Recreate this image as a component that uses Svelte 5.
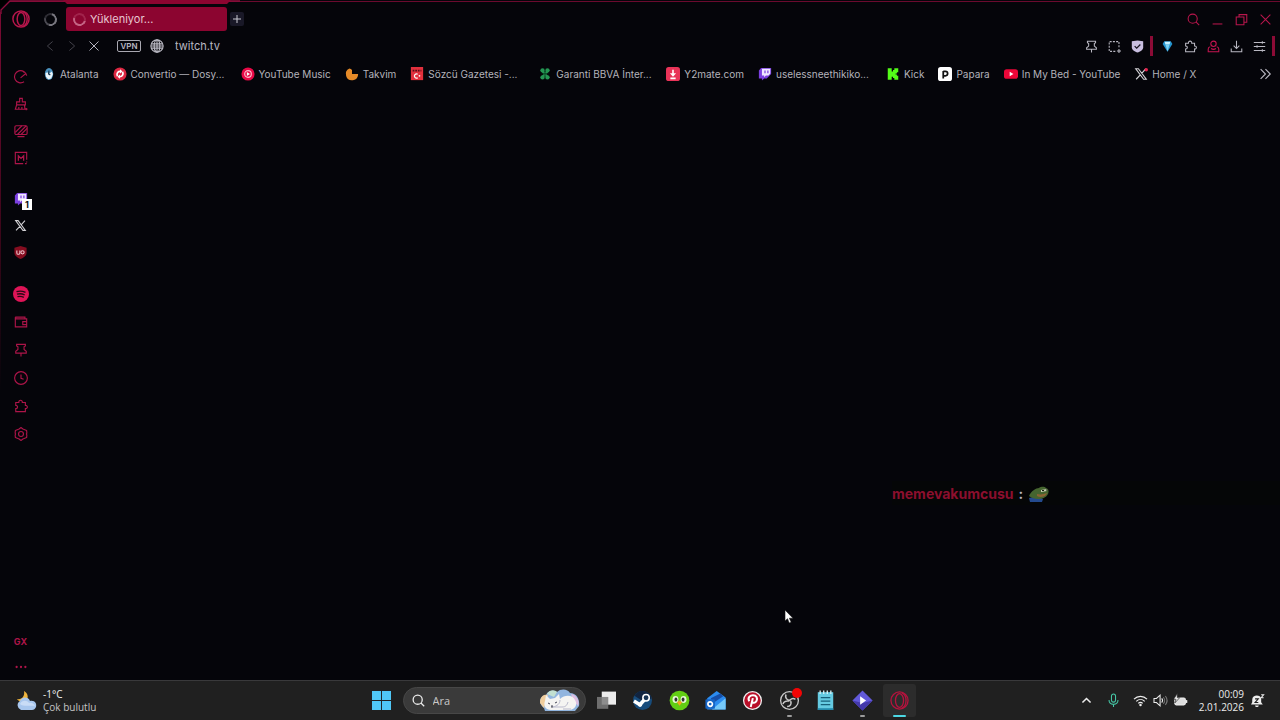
<script lang="ts">
    interface Bookmark {
        icon: string;
        label: string;
        long?: boolean;
    }

    let address = $state("twitch.tv");
    let search = $state("");

    const bookmarks: Bookmark[] = [
        { icon: "atalanta", label: "Atalanta" },
        { icon: "convertio", label: "Convertio — Dosy...", long: true },
        { icon: "ytmusic", label: "YouTube Music" },
        { icon: "takvim", label: "Takvim" },
        { icon: "sozcu", label: "Sözcü Gazetesi -...", long: true },
        { icon: "clover", label: "Garanti BBVA İnter...", long: true },
        { icon: "y2mate", label: "Y2mate.com" },
        { icon: "twitch", label: "uselessneethikiko...", long: true },
        { icon: "kick", label: "Kick" },
        { icon: "papara", label: "Papara" },
        { icon: "youtube", label: "In My Bed - YouTube" },
        { icon: "xdot", label: "Home / X" },
    ];

    const sideGroups = [
        ["gauge", "cleaner", "wallpaper", "mods"],
        ["twitch", "x", "shield"],
        ["spotify", "wallet", "pin", "clock", "puzzle", "settings"],
    ];

    const toolIcons = ["pin", "snapshot", "check"];
    const extIcons = ["gem", "puzzle", "person", "download", "sliders"];
    const windowIcons = ["search", "minimize", "restore", "close"];

    const apps = [
        { icon: "taskview" },
        { icon: "steam" },
        { icon: "duolingo" },
        { icon: "mail" },
        { icon: "pinterest" },
        { icon: "obs", running: true },
        { icon: "notepad" },
        { icon: "clip", running: true },
        { icon: "opera", running: true, active: true },
    ];
</script>

{#snippet icon(name: string)}
    <svg class="icon" viewBox="0 0 16 16" aria-hidden="true">
        {#if name === "opera"}
            <circle cx="8" cy="8" r="7.2" />
            <ellipse cx="8" cy="8" rx="3.4" ry="5.8" />
            <path d="M10 1.6c2.6 1.2 3.5 3.6 3.5 6.4s-.9 5.200-3.500 6.400" />
        {:else if name === "gauge"}
            <path d="M14.500 6.500a7 7 0 1 0-3 7M11.500 2.500l-1.500-1M7.500 9l6-5" />
        {:else if name === "cleaner"}
            <path d="M6.500 1.500h3v4h3.500v3.500H3V5.500h3.500zM3 9l-1.500 5h11L12 9M5.500 14v-2.500M9 14v-2.500M14 12.500v2.500M12.800 13.800h2.600" />
        {:else if name === "wallpaper"}
            <rect x="1" y="2" width="14" height="10" rx="1.500" />
            <path d="M1.500 9.500L9 2M4 12L14 2M8 12l7-7M4 14.500h8" />
        {:else if name === "mods"}
            <path d="M14.500 10V1.500h-13v13h9M14.500 12v1M12.500 14.500h2" />
            <path stroke-width="1.500" d="M5 11V5.500l3 3 3-3V11" />
        {:else if name === "twitch"}
            <path fill="#7b3fe0" stroke="none" d="M3.500 1L1 4v9h3.500v2.500L7 13h3l5-5V1z" />
            <path fill="#efe6ff" stroke="none" d="M4.500 2H14v5.500l-2 2.200H9l-2 2v-2H4.500z" />
            <path stroke="#7b3fe0" stroke-width="1.400" d="M8 4v3.200M11.300 4v3.200" />
        {:else if name === "x" || name === "xdot"}
            <path stroke="#d3d2d6" stroke-width="1.300" d="M2 2h3l9 12h-3zM13.500 2L8.800 7.200M7.200 9L2.500 14" />
            {#if name === "xdot"}<circle cx="14" cy="3" r="2" fill="#e5224d" stroke="none" />{/if}
        {:else if name === "shield"}
            <path fill="#850d20" stroke="none" d="M8 0l7.500 2v6c0 4.500-4 6.500-7.500 8C4.500 14.500.5 12.500.5 8V2z" />
            <path stroke="#f1c5cc" stroke-width="1.300" d="M3.500 5.500v3c0 1 .6 1.700 1.800 1.700S7.200 9.500 7.200 8.500v-3" />
            <circle cx="10.500" cy="7.800" r="2" stroke="#f1c5cc" stroke-width="1.300" />
        {:else if name === "spotify"}
            <circle cx="8" cy="8" r="8" fill="#df1457" stroke="none" />
            <path stroke="#2a0714" stroke-width="1.300" d="M3.500 5.600c3-.9 6.300-.6 9 .8M4 8.200c2.700-.8 5.400-.5 7.700.8M4.500 10.700c2.200-.6 4.400-.4 6.300.7" />
        {:else if name === "wallet"}
            <path d="M12.500 4.500V2.500H2v2M1.500 2.500v11h13v-9h-13M14.500 7.500H10v3.500h4.500" />
        {:else if name === "pin"}
            <path d="M3 1.500h10v1.800l-1.500 1v3.200L14 9.500v2H2v-2l2.500-2V4.300L3 3.300zM8 11.500V15.500" />
        {:else if name === "clock"}
            <circle cx="8" cy="8" r="7.300" />
            <path d="M8 4v4.300l3 1.200" />
        {:else if name === "puzzle"}
            <path d="M2 4h3.500c-.5-3.500 4.500-3.500 4 0H13v3.300c3-.3 3 4 0 3.700V14.500H2V11c2.800 0 2.800-3.700 0-3.700z" />
        {:else if name === "settings"}
            <path stroke-linejoin="round" d="M8 .6l2.200 1.600 4.200 1.700.3 3L14.200 8l.5 1.100-.3 3-4.200 1.700L8 15.400l-2.200-1.600-4.200-1.700-.3-3L1.800 8l-.5-1.100.3-3 4.200-1.700z" />
            <circle cx="8" cy="8" r="2.800" />
        {:else if name === "search"}
            <circle cx="7" cy="7" r="5.600" />
            <path d="M11 11l4 4" />
        {:else if name === "minimize"}
            <path d="M2 13.500h12" />
        {:else if name === "restore"}
            <path d="M5 5V2h9.500v9.500H11M1.500 5H11v9.500H1.500z" />
        {:else if name === "close"}
            <path d="M2 2l12 12M14 2L2 14" />
        {:else if name === "back"}
            <path d="M11.500 2l-7 6 7 6" />
        {:else if name === "forward"}
            <path d="M4.500 2l7 6-7 6" />
        {:else if name === "globe"}
            <circle cx="8" cy="8" r="7" />
            <ellipse cx="8" cy="8" rx="3.200" ry="7" />
            <path d="M1.500 5.500h13M1.500 10.500h13M8 1v14M1 8h14" />
        {:else if name === "snapshot"}
            <path stroke-dasharray="2.500 1.500" d="M13.500 9V2h-12v12H10" />
            <path d="M13.500 11v5M11 13.500h5" />
        {:else if name === "check"}
            <path fill="#c9bfe0" stroke="none" d="M1 1.500l7-1 7 1V9c0 3.500-4 5.500-7 6.500C5 14.500 1 12.500 1 9z" />
            <path stroke="#17131f" stroke-width="1.500" d="M4.500 7.500L7 10l4.500-4.500" />
        {:else if name === "gem"}
            <path fill="#2494cf" stroke="none" d="M4 1.500h8L14 5 8 14.500 2 5z" />
            <path fill="#c8f1ff" stroke="none" d="M4.500 2h7l-1 3.500h-5z" />
            <path fill="#7bd0f2" stroke="none" d="M5.500 5.500h5L8 14z" />
        {:else if name === "person"}
            <circle cx="8" cy="4.700" r="3.300" />
            <path d="M4 8.200C2 8.500 1.500 10 1.500 11v3.500h13V11c0-1-.5-2.500-2.500-2.800M5 10.500c1.800 1.200 4.200 1.200 6 0" />
        {:else if name === "download"}
            <path d="M8 1v9.500M4.500 7L8 10.500 11.500 7M1.500 10.500v4h13v-4" />
        {:else if name === "sliders"}
            <path d="M1 3h14M1 8h14M1 13h14M11.500 1.500v3M5 6.500v3M11.500 11.500v3" />
        {:else if name === "more"}
            <path d="M3 2.500L8.500 8 3 13.500M8.500 2.500L14 8l-5.500 5.500" />
        {:else if name === "atalanta"}
            <ellipse cx="8" cy="8" rx="4.800" ry="6.800" fill="#4b91bd" stroke="none" />
            <path fill="#eaf4fa" stroke="none" d="M4 7l2-1 2 2 3-3 1.500 3-2 5-3.500 1-2.500-3z" />
            <path stroke="#153047" d="M8 4l-.5 4 2 1" />
        {:else if name === "convertio"}
            <circle cx="8" cy="8" r="7.500" fill="#dc2742" stroke="none" />
            <path stroke="#fff" stroke-width="2" d="M5 10.500C3.500 7 6 4.500 9 5M11 5.500c1.500 3.500-1 6-4 5.500" />
            <path fill="#fff" stroke="none" d="M8 2.500L11 5 8 7.500zM8 8.500v5L5 11z" />
        {:else if name === "ytmusic"}
            <circle cx="8" cy="8" r="7.500" fill="#e80846" stroke="none" />
            <circle cx="8" cy="8" r="3.800" stroke="#ffb7ca" />
            <path fill="#fff" stroke="none" d="M6.700 5.800L10.300 8l-3.600 2.200z" />
        {:else if name === "takvim"}
            <path fill="#e58a28" stroke="none" d="M8 8V3.500A4 4 0 0 0 5 1.800 7 7 0 1 0 15 8z" />
        {:else if name === "sozcu"}
            <path fill="#e2303d" stroke="none" d="M1 0h14v15H1z" />
            <path stroke="#571019" stroke-width="2" stroke-dasharray="2 1" d="M3 4h10" />
            <path stroke="#fff" stroke-width="1.400" d="M8.800 8.300a2.400 2.400 0 1 0 0 4" />
            <circle cx="10.800" cy="10" r="1" fill="#fff" stroke="none" />
        {:else if name === "clover"}
            <g fill="#249653" stroke="none">
                <circle cx="5.200" cy="3.800" r="2.500" /><circle cx="10.800" cy="3.800" r="2.500" />
                <circle cx="5.200" cy="11.800" r="2.500" /><circle cx="10.800" cy="11.800" r="2.500" />
                <path d="M3.500 5h9L9.500 8l3 3h-9l3-3z" />
            </g>
            <path stroke="#063a1c" stroke-width=".9" d="M8 2v12M4 7.800h8" />
        {:else if name === "y2mate"}
            <rect x="0" y="0" width="16" height="16" rx="3" fill="#e93358" stroke="none" />
            <path stroke="#fff" stroke-width="1.800" d="M8 3v6M5 13h6" />
            <path fill="#fff" stroke="none" d="M4.500 7h7L8 11z" />
        {:else if name === "kick"}
            <path fill="#53fc18" stroke="none" d="M2 1.500h4.500V5H8V3.500h1.500v-2H14V6h-1.500v1.500H11v1h1.500V10H14v4.500H9.500v-2H8V11H6.500v3.500H2z" />
        {:else if name === "papara"}
            <rect x="0" y="0" width="16" height="16" rx="3" fill="#fff" stroke="none" />
            <path stroke="#111" stroke-width="2" d="M6 4.500v8.500M6 5h2.500a2.300 2.300 0 1 1 0 5H6" />
        {:else if name === "youtube"}
            <rect x="0" y="2.500" width="16" height="11" rx="3" fill="#ec0638" stroke="none" />
            <path fill="#fff" stroke="none" d="M6.500 5.500L10.800 8l-4.300 2.500z" />
        {:else if name === "start"}
            <path fill="#50c7f6" stroke="none" d="M0 0h7.600v7.600H0zM8.400 0H16v7.600H8.400zM0 8.400h7.600V16H0zM8.400 8.400H16V16H8.400z" />
        {:else if name === "taskview"}
            <path fill="#ececec" stroke="none" d="M4 .5h12v11H4z" />
            <path fill="#7c7c7c" fill-opacity=".85" stroke="none" d="M0 5h9.500v10H0z" />
        {:else if name === "steam"}
            <circle cx="8" cy="8" r="8" fill="#174c7c" stroke="none" />
            <path fill="#112440" stroke="none" d="M1.200 4A8 8 0 0 1 15.800 6L9 9z" />
            <path stroke="#fff" stroke-width="3" d="M.8 8.500l5 3L10 7" />
            <circle cx="11" cy="5.700" r="2.700" fill="#173455" stroke="#fff" stroke-width="1.300" />
            <circle cx="6" cy="11.500" r="1.800" fill="#fff" stroke="none" />
        {:else if name === "duolingo"}
            <circle cx="8" cy="8" r="8.300" fill="#62ce13" stroke="none" />
            <ellipse cx="4.600" cy="7.200" rx="2.500" ry="2.900" fill="#e6f7d5" stroke="none" />
            <ellipse cx="11.400" cy="7.200" rx="2.500" ry="2.900" fill="#e6f7d5" stroke="none" />
            <ellipse cx="5" cy="7.200" rx="1.200" ry="1.800" fill="#333" stroke="none" />
            <ellipse cx="11" cy="7.200" rx="1.200" ry="1.800" fill="#333" stroke="none" />
            <path fill="#f4a51f" stroke="none" d="M5.800 9.500L8 8l2.200 1.500L8 12.500z" />
        {:else if name === "mail"}
            <path fill="#2b8cf0" stroke="none" d="M1 6l8-6 7.500 5.500v10H1z" />
            <path fill="#164ea8" stroke="none" d="M4 6l8-4 2.500 2.500L6 10z" />
            <path fill="#75c9fa" stroke="none" d="M16.500 6v9.500H5z" />
            <rect x="-.5" y="7" width="8" height="8" rx="1" fill="#1665c5" stroke="none" />
            <circle cx="3.500" cy="11" r="1.900" stroke="#fff" stroke-width="1.400" />
        {:else if name === "pinterest"}
            <circle cx="8" cy="8" r="7.500" fill="#b90f29" stroke="#eee" />
            <path stroke="#fff" stroke-width="1.700" d="M5.300 8.700C3.500 5.500 6 3.500 8.400 3.500c3 0 4 2.500 3 4.800-1 2.200-3.300 2-3.700.8M8.300 6L6.500 13.500" />
        {:else if name === "obs"}
            <circle cx="8" cy="8" r="7.500" fill="#202020" stroke="#c9c9c9" />
            <path stroke="#c9c9c9" stroke-width="1.300" d="M5 3c-1 3 1 4.500 3 4.800M13 7c-2.500-1.500-4.500 0-5 1.500M6 13c2.700 0 4-2 3-4.500M8 8.500C5.500 8 3 9 2.500 11" />
        {:else if name === "notepad"}
            <path fill="#65cbe2" stroke="none" d="M1.500 1h13v15h-13z" />
            <path fill="#238aac" stroke="none" d="M1.500 14.500h13V16h-13z" />
            <path stroke="#d8f4f8" d="M3.500-.5v3M6.500-.5v3M9.500-.5v3M12.500-.5v3" />
            <path stroke="#17617b" d="M4 5.500h8M4 8.500h8M4 11.500h8" />
        {:else if name === "clip"}
            <path fill="#6259d9" stroke="none" d="M8-.5L16.500 8 8 16.500-.5 8z" />
            <path fill="#4439aa" stroke="none" d="M-.5 8L8 16.500 16.500 8 8 10z" />
            <path fill="#fff" stroke="none" d="M6 4.500L11 8l-5 3.500z" />
        {:else if name === "chevron"}
            <path stroke-width="1.900" d="M3 10.500l5-5 5 5" />
        {:else if name === "mic"}
            <rect x="5.500" y="0" width="5" height="10" rx="2.500" />
            <path d="M2.500 7.500c0 7 11 7 11 0M8 12.500V16" />
        {:else if name === "wifi"}
            <path stroke-width="1.500" d="M0 6.300c4.500-4.500 11.500-4.500 16 0M2.800 9c3-3 7.400-3 10.400 0M5.300 11.500c1.500-1.500 3.900-1.500 5.400 0" />
            <circle cx="8" cy="13.500" r="1.500" fill="#eee" stroke="none" />
        {:else if name === "volume"}
            <path d="M0 5.500h3l4.500-4v13l-4.500-4H0z" />
            <path d="M9.500 5.500c1.300 1.500 1.300 3.500 0 5" />
            <path stroke="#777" d="M11.500 4c2 2.200 2 5.800 0 8M14 2.500c2.700 3.500 2.700 7.500 0 11" />
        {:else if name === "battery"}
            <rect x="1" y="5" width="13" height="8.500" rx="2" fill="#ddd" stroke="#eee" />
            <path stroke-width="1.700" d="M15.500 7.500v3.500" />
            <path fill="#eee" stroke="#202020" stroke-width=".8" d="M4-.5L-.5 6.500H2.500L1 11l6-6.500H4z" />
        {:else if name === "bell"}
            <path fill="#eee" stroke="none" d="M0 13l1.500-3V7c0-6.500 10.500-6.500 11-1v4l2 3zM5 14h4.500c0 2.500-4.500 2.500-4.500 0z" />
            <path stroke="#202020" d="M5 6h4l-4 4.500h4" />
            <path d="M12.500 1h3l-3 3.500h3" />
        {/if}
    </svg>
{/snippet}

<div class="desktop">
    <div class="browser">
        <svg class="frame" width="240" height="14" viewBox="0 0 240 14" aria-hidden="true">
            <path d="M0 0h9L0 9z" fill="#000" />
            <path d="M1 14V10L10 1H240" fill="none" stroke="#8f0e3d" stroke-width="1.300" />
            <path d="M63 0H231L227 4H67z" fill="#8c0530" />
        </svg>

        <header class="tabs">
            <button class="logo" aria-label="Opera">{@render icon("opera")}</button>
            <span class="spinner"></span>
            <button class="tab"><span class="spinner pink"></span>Yükleniyor...</button>
            <button class="add" aria-label="Yeni sekme">
                <svg viewBox="0 0 14 14"><path d="M7 3v8M3 7h8" /></svg>
            </button>
            <div class="window-controls">
                {#each windowIcons as name}
                    <button aria-label={name}>{@render icon(name)}</button>
                {/each}
            </div>
        </header>

        <div class="toolbar">
            <button class="nav dim" aria-label="Geri">{@render icon("back")}</button>
            <button class="nav dim" aria-label="İleri">{@render icon("forward")}</button>
            <button class="nav" aria-label="Durdur">{@render icon("close")}</button>
            <button class="vpn">VPN</button>
            <span class="globe">{@render icon("globe")}</span>
            <input class="address" type="text" aria-label="Adres" bind:value={address} />
            <div class="tools">
                {#each toolIcons as name}
                    <button aria-label={name}>{@render icon(name)}</button>
                {/each}
                <span class="bar"></span>
                {#each extIcons as name}
                    <button class:red={name === "person"} aria-label={name}>{@render icon(name)}</button>
                {/each}
                <span class="bar"></span>
            </div>
        </div>

        <nav class="bookmarks">
            {#each bookmarks as mark}
                <a href="#{mark.icon}">
                    {@render icon(mark.icon)}
                    <span class:long={mark.long}>{mark.label}</span>
                </a>
            {/each}
            <button class="overflow" aria-label="Diğer yer imleri">{@render icon("more")}</button>
        </nav>

        <aside class="sidebar">
            {#each sideGroups as group}
                <div class="group">
                    {#each group as name}
                        <button class={name} aria-label={name}>
                            {@render icon(name)}
                            {#if name === "twitch"}<span class="badge">1</span>{/if}
                        </button>
                    {/each}
                </div>
            {/each}
            <div class="group bottom">
                <button class="gx">GX</button>
                <button aria-label="Kenar çubuğu ayarları">
                    <svg class="icon dots" viewBox="0 0 16 16">
                        <circle cx="3" cy="8" r="1.300" /><circle cx="8" cy="8" r="1.300" /><circle cx="13" cy="8" r="1.300" />
                    </svg>
                </button>
            </div>
        </aside>

        <div class="chat">
            <span class="user">memevakumcusu</span>
            <span>:</span>
            <svg width="22" height="18" viewBox="0 0 22 18" aria-hidden="true">
                <path fill="#244a8e" d="M1 14l8-2 6 3-1 3H2z" />
                <path fill="#45652f" d="M1 12c2-5 7-8 10-8 3-2 6-1 7 0 3 1 3 4 2 6-2 4-6 5-10 5-3 0-7-1-9-3z" />
                <path fill="#8b6333" d="M9 10c4 1 7 0 10-1-1 4-7 5-10 3z" />
                <path fill="#c7d0b4" d="M13 6l6-1v2l-6 1z" />
                <path stroke="#151b12" d="M14 6.500h2M18 6h1" />
            </svg>
        </div>
    </div>

    <footer class="taskbar">
        <button class="weather">
            <svg width="22" height="22" viewBox="0 0 22 22" aria-hidden="true">
                <path fill="#efb43c" d="M9 1c4 2 5 7 2 10-3 2-7 1-9-2 5 1 8-3 7-8z" />
                <path fill="#a9c7ee" d="M6 20a5 5 0 0 1-1-9c1-4 8-5 10 0 5-1 7 3 6 6-1 2-2 3-4 3z" />
                <path fill="#c9dcf6" d="M5 14c2-4 7-4 9-1 3-1 5 1 6 3-4-1-12 1-15-2z" />
            </svg>
            <span><span class="temp">-1°C</span><br />Çok bulutlu</span>
        </button>

        <div class="center">
            <button class="start" aria-label="Başlat">{@render icon("start")}</button>
            <label class="search">
                {@render icon("search")}
                <input type="text" placeholder="Ara" aria-label="Ara" bind:value={search} />
                <svg width="42" height="24" viewBox="0 0 42 24" aria-hidden="true">
                    <path fill="#91b5df" d="M5 19C-1 15 0 7 7 6c2-5 8-5 11-3 4-4 11-3 13 1 7 0 10 7 9 13l-4 5H6z" />
                    <path fill="#f0cd9c" d="M1 14c0-7 4-9 8-8L5 19z" />
                    <path fill="#dfbfe1" d="M32 5c6 1 9 7 7 12l-5-6z" />
                    <path fill="#c2e0d1" d="M8 5c3-5 8-4 10-2l-3 5z" />
                    <path fill="#f5f4f2" d="M6 12l1-6 4 4 5-1 4-4 1 5c5-5 13-4 15 1 3 5 0 9-5 10H12c-5 0-8-4-6-9z" />
                    <path fill="none" stroke="#b9b9cc" d="M21 11c0 4-3 6-7 7h9c4 0 5-2 6-5M24 20h8" />
                    <path fill="none" stroke="#444455" d="M9 14l2 1M16 14l2-1M12 17h2M13 17v2" />
                </svg>
            </label>
            <div class="apps">
                {#each apps as app}
                    <button class="app" class:active={app.active} aria-label={app.icon}>
                        {@render icon(app.icon)}
                        {#if app.icon === "obs"}<span class="record"></span>{/if}
                        {#if app.running}<span class="running"></span>{/if}
                    </button>
                {/each}
            </div>
        </div>

        <div class="tray">
            <button aria-label="Gizli simgeler">{@render icon("chevron")}</button>
            <button class="mic" aria-label="Mikrofon">{@render icon("mic")}</button>
            <button class="status" aria-label="Ağ, ses, pil">
                {@render icon("wifi")}
                {@render icon("volume")}
                {@render icon("battery")}
            </button>
            <button class="clock-text">00:09<br />2.01.2026</button>
            <button class="bell" aria-label="Bildirimler">{@render icon("bell")}</button>
        </div>
    </footer>

    <svg class="cursor" width="10" height="15" viewBox="0 0 10 15" aria-hidden="true">
        <path fill="#fff" stroke="#111" stroke-width=".6" d="M1 1v11l2.500-2.300L5.200 14l2-.8-1.800-4H9z" />
    </svg>
</div>

<style>
    :global(body) {
        background: #05050a;
    }

    .desktop {
        --red: #b8164c;
        --light: #b9b8c2;
        position: relative;
        display: flex;
        flex-direction: column;
        min-height: 100vh;
        overflow: hidden;
        font-family: Inter, "Liberation Sans", sans-serif;
        font-size: 11px;
        color: var(--light);
    }

    button,
    input {
        padding: 0;
        border: none;
        background: none;
        color: inherit;
        font: inherit;
    }

    button {
        display: flex;
        align-items: center;
        justify-content: center;
        flex-shrink: 0;
    }

    input {
        min-width: 0;
        outline: none;
    }

    .icon {
        width: 14px;
        height: 14px;
        flex-shrink: 0;
        fill: none;
        stroke: currentColor;
        stroke-width: 1.3;
        overflow: visible;
    }

    .browser {
        position: relative;
        flex: 1;
        display: flex;
        flex-direction: column;
        background: #05050a;
    }

    .browser::before {
        content: "";
        position: absolute;
        inset: 1px 0 auto 10px;
        height: 1px;
        background: #6b0a2e;
    }

    .browser::after {
        content: "";
        position: absolute;
        top: 12px;
        left: 0;
        width: 1px;
        height: 380px;
        background: linear-gradient(#7c0b34, #3a0619 60%, transparent);
    }

    .frame {
        position: absolute;
        top: 0;
        left: 0;
    }

    .tabs {
        position: relative;
        display: flex;
        align-items: center;
        height: 26px;
        padding: 6px 3px 0 12px;
    }

    .logo {
        width: 18px;
        color: var(--red);
    }

    .logo .icon {
        width: 18px;
        height: 18px;
    }

    .spinner {
        width: 9px;
        height: 9px;
        margin: 0 9px 0 14px;
        border: 2px solid #77767e;
        border-top-color: #2d2c33;
        border-left-color: #494850;
        border-radius: 50%;
        transform: rotate(-30deg);
    }

    .spinner.pink {
        margin: 0 4px 0 7px;
        border-color: #c46484;
        border-top-color: #a0234b;
        border-right-color: #a0234b;
    }

    .tab {
        justify-content: flex-start;
        width: 161px;
        height: 24px;
        border-radius: 3px;
        background: #8c0530;
        color: #e8c6d1;
    }

    .add {
        width: 14px;
        height: 14px;
        margin-left: 3px;
        border-radius: 2px;
        background: #191827;
    }

    .add svg {
        width: 14px;
        fill: none;
        stroke: #c9c8d2;
    }

    .window-controls {
        display: flex;
        margin-left: auto;
        color: var(--red);
    }

    .window-controls button {
        width: 24px;
        height: 24px;
    }

    .window-controls .icon,
    .tools .icon {
        width: 13px;
        height: 13px;
    }

    .toolbar {
        display: flex;
        align-items: center;
        height: 28px;
        padding: 0 2px 0 39px;
    }

    .nav {
        width: 22px;
        height: 22px;
    }

    .nav .icon {
        width: 12px;
        height: 12px;
    }

    .dim {
        color: #45444c;
    }

    .vpn {
        width: 24px;
        height: 12px;
        margin: 0 9px 0 12px;
        border: 1px solid #a9a8b1;
        border-radius: 2px;
        box-sizing: border-box;
        font-size: 8px;
        font-weight: 600;
    }

    .globe {
        display: flex;
        margin-right: 11px;
    }

    .address {
        flex: 1;
    }

    .tools {
        display: flex;
        align-items: center;
    }

    .tools button {
        width: 23px;
        height: 23px;
    }

    .tools .red {
        color: #c51450;
    }

    .bar {
        width: 3px;
        height: 20px;
        margin: 0 3px 0 1px;
        background: #8c0b36;
    }

    .bookmarks {
        display: flex;
        align-items: center;
        gap: 14px;
        height: 28px;
        padding: 0 8px 0 42px;
        font-size: 10px;
    }

    .bookmarks a {
        display: flex;
        align-items: center;
        gap: 4px;
        flex-shrink: 0;
        color: #b4b3bb;
        text-decoration: none;
        white-space: nowrap;
    }

    .long {
        min-width: 96px;
    }

    .overflow {
        margin-left: auto;
    }

    .sidebar {
        flex: 1;
        display: flex;
        flex-direction: column;
        gap: 14px;
        width: 41px;
        margin-top: -25px;
        color: #ad1549;
    }

    .group button {
        position: relative;
        width: 41px;
        height: 27px;
    }

    .group:nth-child(3) button {
        height: 28px;
    }

    .spotify .icon {
        width: 16px;
        height: 16px;
    }

    .group .shield .icon,
    .group .x .icon {
        width: 13px;
        height: 13px;
    }

    .badge {
        position: absolute;
        left: 22px;
        top: 14px;
        width: 10px;
        height: 11px;
        background: #fff;
        color: #111;
        font-size: 9px;
        font-weight: 700;
        line-height: 11px;
    }

    .group.bottom {
        margin-top: auto;
    }

    .group.bottom button {
        height: 26px;
    }

    .gx {
        font-size: 9px;
        font-weight: 700;
    }

    .dots {
        fill: currentColor;
        stroke: none;
    }

    .chat {
        position: absolute;
        left: 892px;
        right: 0;
        bottom: 175px;
        display: flex;
        align-items: center;
        gap: 5px;
        height: 24px;
        background: #050607;
        font-size: 14px;
        font-weight: 700;
    }

    .user {
        color: #8c0f2e;
    }

    .taskbar {
        display: grid;
        grid-template-columns: 1fr auto 1fr;
        align-items: center;
        height: 39px;
        border-top: 1px solid #39393b;
        background: #202020;
        color: #ececec;
        font-family: "Open Sans", "Noto Sans", sans-serif;
        font-size: 10px;
        line-height: 13px;
    }

    .weather {
        justify-self: start;
        gap: 6px;
        padding-left: 15px;
        color: #c4c4c4;
        text-align: left;
    }

    .temp {
        color: #f1f1f1;
    }

    .center {
        display: flex;
        align-items: center;
        gap: 4px;
    }

    .start {
        width: 34px;
        height: 34px;
    }

    .start .icon,
    .app .icon {
        width: 19px;
        height: 19px;
        stroke-width: 1.1;
    }

    .search {
        display: flex;
        align-items: center;
        gap: 8px;
        box-sizing: border-box;
        width: 183px;
        height: 27px;
        padding: 0 4px 0 8px;
        border: 1px solid #474747;
        border-radius: 14px;
        background: #3a3a3a;
    }

    .search input {
        flex: 1;
        font-size: 11px;
    }

    .search input::placeholder {
        color: #c8c8c8;
    }

    .search .icon {
        width: 13px;
        height: 13px;
        stroke-width: 1.6;
    }

    .apps {
        display: flex;
        justify-content: space-between;
        width: 326px;
    }

    .app {
        position: relative;
        width: 33px;
        height: 33px;
        border-radius: 3px;
        color: #b5133e;
    }

    .app.active {
        background: #2c2c2c;
    }

    .running {
        position: absolute;
        bottom: 0;
        left: 14px;
        width: 5px;
        height: 2px;
        border-radius: 1px;
        background: #9c9c9c;
    }

    .active .running {
        left: 10px;
        width: 13px;
        background: #4cd8e4;
    }

    .record {
        position: absolute;
        top: 4px;
        right: 4px;
        width: 10px;
        height: 10px;
        border-radius: 50%;
        background: #f20505;
    }

    .tray {
        display: flex;
        align-items: center;
        justify-content: flex-end;
        padding-right: 9px;
    }

    .tray button {
        min-width: 27px;
        height: 30px;
    }

    .tray .icon {
        width: 13px;
        height: 13px;
    }

    .tray .mic {
        color: #45c5a5;
    }

    .tray .status {
        gap: 7px;
        padding: 0 7px;
    }

    .tray .clock-text {
        min-width: 46px;
        justify-content: flex-end;
        margin-left: 4px;
        text-align: right;
    }

    .cursor {
        position: absolute;
        left: 784px;
        top: 609px;
    }
</style>
